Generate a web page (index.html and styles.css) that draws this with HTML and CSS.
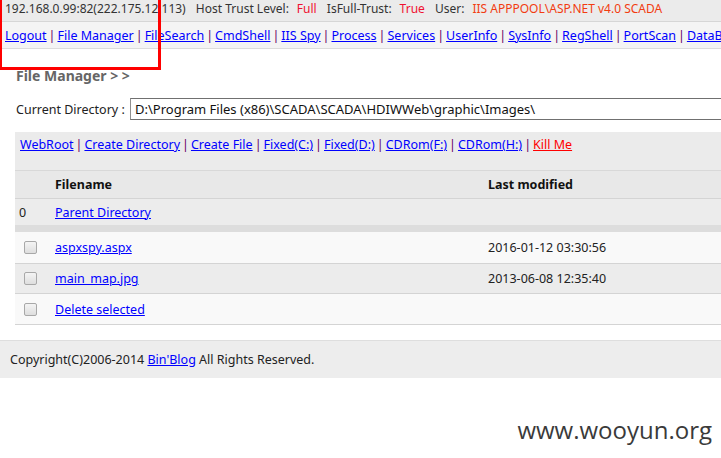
FILE: index.html
```html
<!DOCTYPE html>
<html>
<head>
<meta charset="utf-8">
<link rel="stylesheet" href="styles.css">
</head>
<body>
<div class="topbar">
  <span>192.168.0.99:82(222.175.12.113)</span>
  <span class="gap">Host Trust Level:</span><span class="red">Full</span>
  <span class="gap">IsFull-Trust:</span><span class="red">True</span>
  <span class="gap">User:</span><span class="orange">IIS APPPOOL\ASP.NET v4.0 SCADA</span>
</div>
<div class="nav">
  <a href="#">Logout</a><i>|</i><a href="#">File Manager</a><i>|</i><a href="#">FileSearch</a><i>|</i><a href="#">CmdShell</a><i>|</i><a href="#">IIS Spy</a><i>|</i><a href="#">Process</a><i>|</i><a href="#">Services</a><i>|</i><a href="#">UserInfo</a><i>|</i><a href="#">SysInfo</a><i>|</i><a href="#">RegShell</a><i>|</i><a href="#">PortScan</a><i>|</i><a href="#">DataBase</a>
</div>
<div class="main">
  <h2 class="title">File Manager &gt; &gt;</h2>
  <div class="dirrow">
    <span class="dirlabel">Current Directory :</span>
    <input class="dirinput" type="text" value="D:\Program Files (x86)\SCADA\SCADA\HDIWWeb\graphic\Images\">
  </div>
  <div class="tools">
    <a href="#">WebRoot</a><i>|</i><a href="#">Create Directory</a><i>|</i><a href="#">Create File</a><i>|</i><a href="#">Fixed(C:)</a><i>|</i><a href="#">Fixed(D:)</a><i>|</i><a href="#">CDRom(F:)</a><i>|</i><a href="#">CDRom(H:)</a><i>|</i><a href="#" class="kill">Kill Me</a>
  </div>
  <div class="row head">
    <span class="c1"></span><span class="c2">Filename</span><span class="c3">Last modified</span>
  </div>
  <div class="row parent">
    <span class="c1 zero">0</span><span class="c2"><a href="#">Parent Directory</a></span><span class="c3"></span>
  </div>
  <div class="band"></div>
  <div class="row light">
    <span class="c1"><span class="cb"></span></span><span class="c2"><a href="#">aspxspy.aspx</a></span><span class="c3">2016-01-12 03:30:56</span>
  </div>
  <div class="row dark">
    <span class="c1"><span class="cb"></span></span><span class="c2"><a href="#">main_map.jpg</a></span><span class="c3">2013-06-08 12:35:40</span>
  </div>
  <div class="row light">
    <span class="c1"><span class="cb"></span></span><span class="c2"><a href="#">Delete selected</a></span><span class="c3"></span>
  </div>
</div>
<div class="footer">Copyright(C)2006-2014 <a href="#">Bin'Blog</a> All Rights Reserved.</div>
<div class="watermark">www.wooyun.org</div>
<div class="redbox"></div>
</body>
</html>
```
FILE: styles.css
```css
html, body {
  margin: 0;
  padding: 0;
  background: #fff;
}
body {
  font-family: "Noto Sans", "Noto Sans CJK SC", sans-serif;
  font-size: 12px;
  color: #222;
  position: relative;
  width: 721px;
  height: 458px;
  overflow: hidden;
}
a {
  color: #0000ff;
  text-decoration: underline;
}
i {
  font-style: normal;
  color: #606;
  margin: 0 2px;
}
.topbar {
  height: 21px;
  line-height: 18px;
  background: #ebebeb;
  border-bottom: 1px solid #d6d6d6;
  padding-left: 5px;
  white-space: nowrap;
  color: #333;
}
.topbar .gap { margin-left: 7px; margin-right: 8px; }
.red { color: #f01030; }
.orange { color: #f23c10; }
.nav {
  height: 26px;
  line-height: 28px;
  background: #f4f4f4;
  border-bottom: 1px solid #dcdcdc;
  padding-left: 5px;
  white-space: nowrap;
  overflow: hidden;
  font-size: 12.5px;
}
.main {
  padding-left: 15px;
}
.title {
  margin: 0;
  padding-top: 17px;
  height: 20px;
  line-height: 20px;
  font-size: 14px;
  font-weight: bold;
  color: #666;
  padding-left: 1px;
  white-space: pre;
}
.dirrow {
  display: flex;
  align-items: center;
  margin-top: 12px;
  height: 22px;
  white-space: nowrap;
}
.dirlabel {
  width: 114px;
  flex: none;
  padding-left: 1px;
  font-size: 12.5px;
  color: #222;
}
.dirinput {
  flex: none;
  width: 640px;
  height: 22px;
  box-sizing: border-box;
  border: 1px solid #707070;
  border-left: 1px solid #909090;
  border-right: none;
  padding: 0 0 0 4px;
  margin: 0;
  font-family: inherit;
  font-size: 13px;
  color: #111;
  background: #fff;
  outline: none;
}
.tools {
  margin-top: 12px;
  height: 38px;
  line-height: 26px;
  padding-left: 5px;
  background: #ebebeb;
  white-space: nowrap;
  font-size: 12.5px;
}
.tools .kill { color: #f00; }
.row {
  display: flex;
  align-items: center;
  height: 29px;
  border-top: 1px solid #d4d4d4;
  white-space: nowrap;
  font-size: 12.5px;
}
.row.head {
  height: 27px;
  background: #e8e8e8;
  font-weight: bold;
  color: #111;
  border-top: 1px solid #d8d8d8;
}
.row.parent {
  height: 26px;
  background: #ececec;
  border-top: 1px solid #d4d4d4;
}
.band {
  height: 7px;
  background: #dddddd;
}
.row.light { background: #f9f9f9; height: 30px; }
.band + .row { border-top: none; height: 31px; }
.row.dark { background: #ececec; }
.main .row:last-child { border-bottom: 1px solid #d4d4d4; }
.c1 { width: 40px; flex: none; display: flex; justify-content: flex-start; padding-left: 9px; box-sizing: border-box; }
.c1.zero { padding-left: 4px; }
.c2 { width: 433px; flex: none; }
.c3 { flex: 1; color: #222; }
.row.head .c3 { color: #111; }
.cb {
  display: inline-block;
  width: 11px;
  height: 11px;
  border: 1px solid #a8a8a8;
  border-radius: 2px;
  background: linear-gradient(#f4f4f4, #dedede);
}
.footer {
  margin-top: 15px;
  height: 37px;
  line-height: 37px;
  background: #ededed;
  border-top: 1px solid #dedede;
  padding-left: 10px;
  font-size: 12.5px;
  color: #222;
}
.watermark {
  text-align: right;
  padding-right: 9px;
  margin-top: 35px;
  font-family: "Open Sans", "Noto Sans", sans-serif;
  font-size: 24px;
  color: #3a3a3a;
}
.redbox {
  position: absolute;
  left: -1px;
  top: -4px;
  width: 156px;
  height: 68px;
  border: 3px solid #ff0000;
}
```
